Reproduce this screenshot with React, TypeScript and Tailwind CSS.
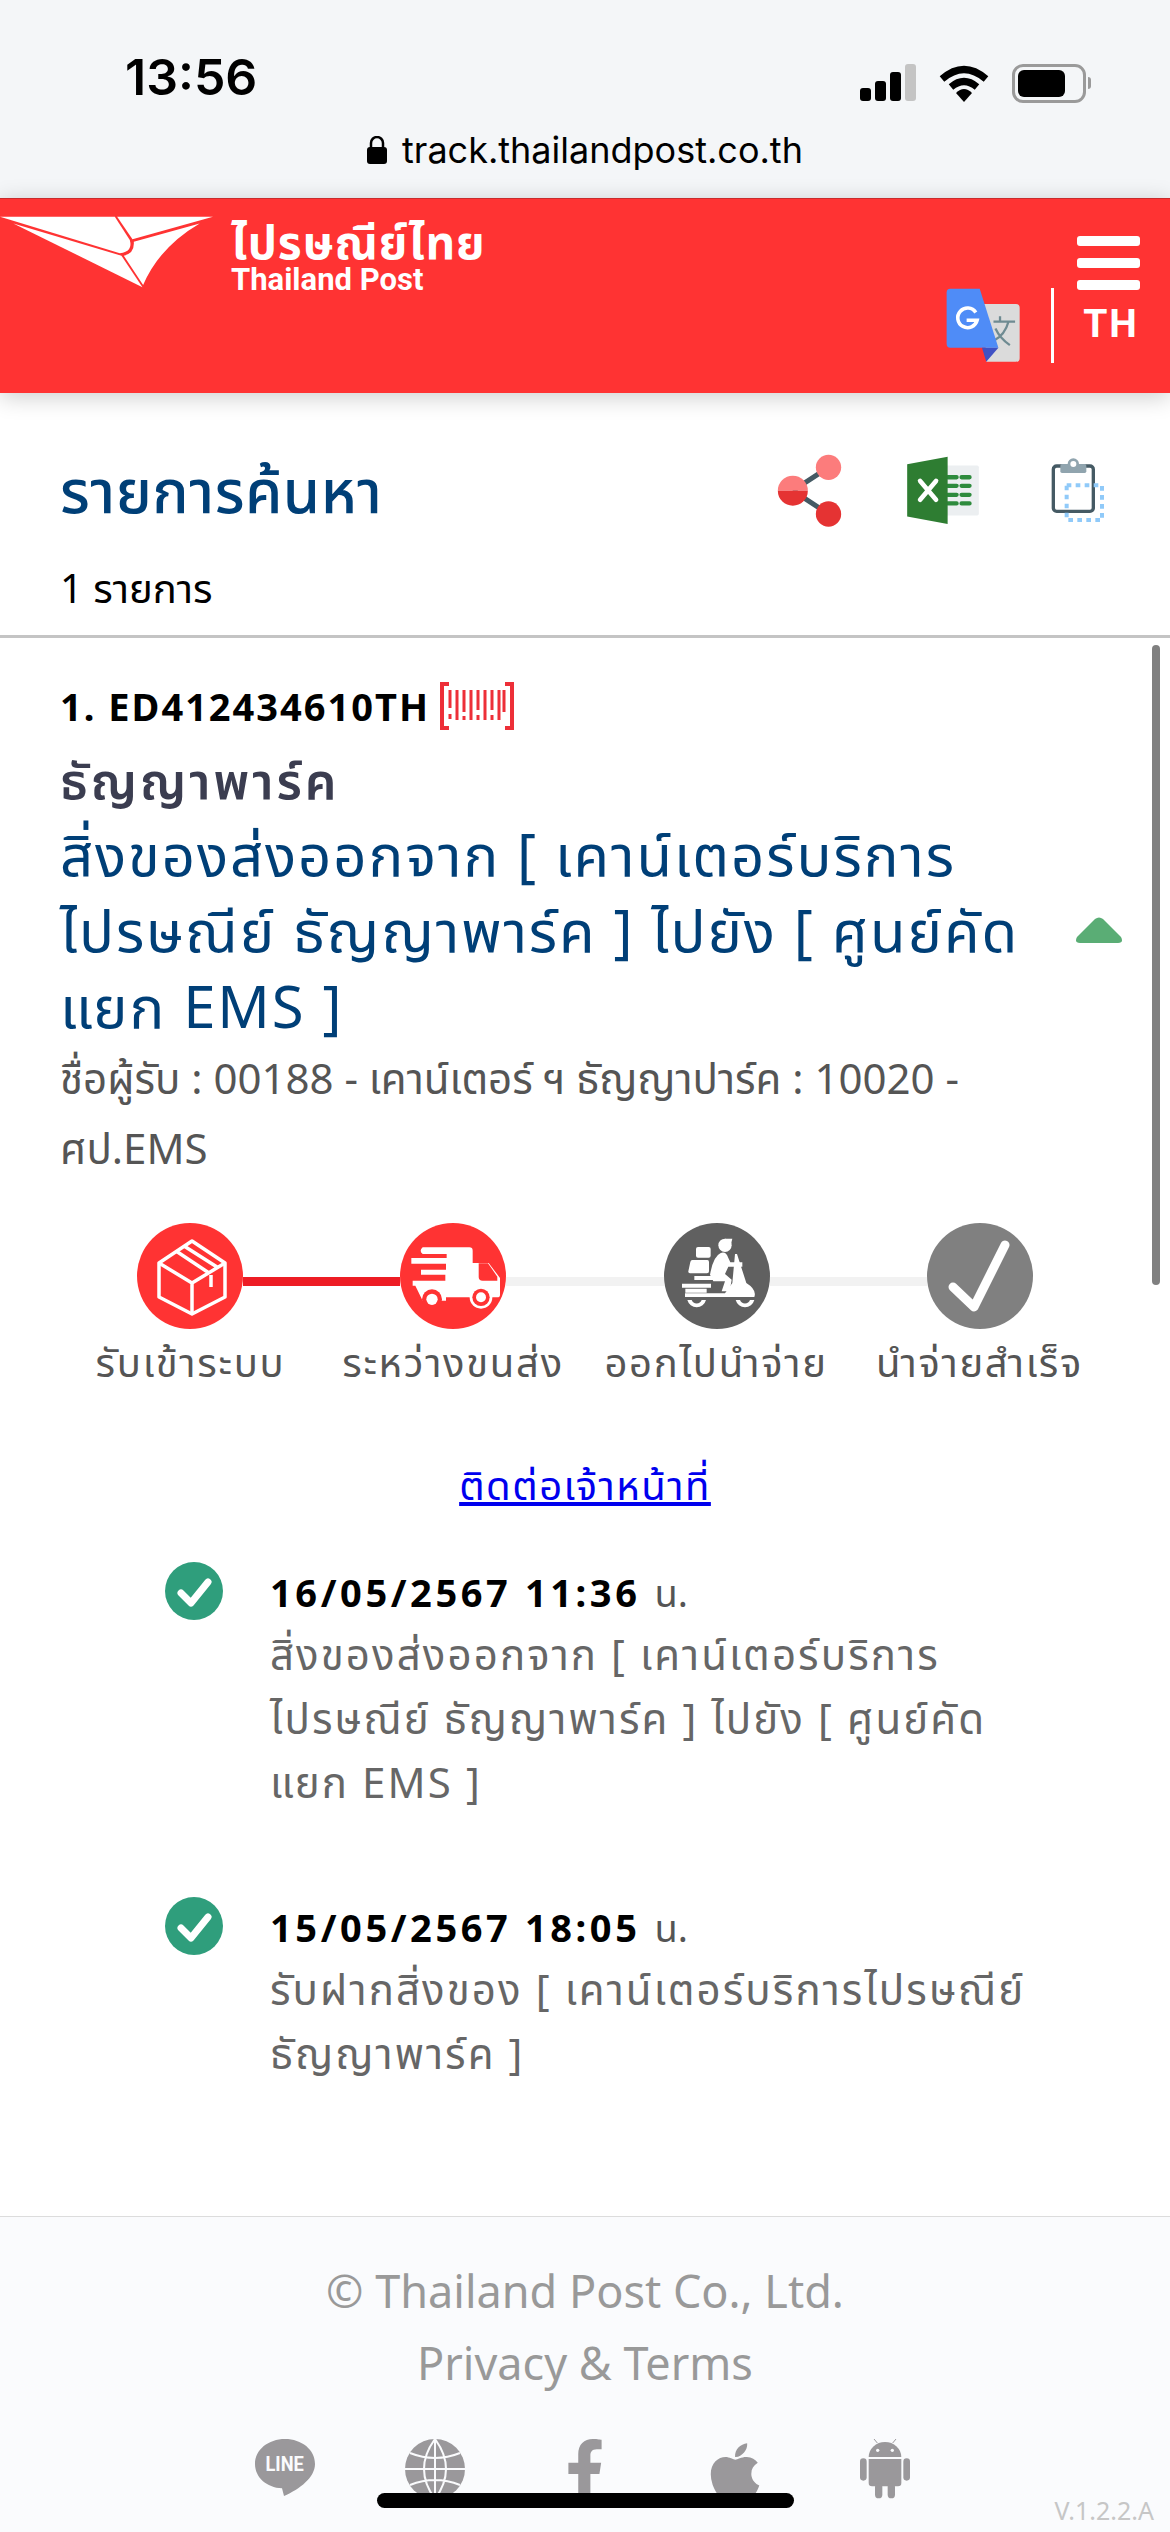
import { FaApple, FaFacebookF } from 'react-icons/fa'

const steps = ['รับเข้าระบบ', 'ระหว่างขนส่ง', 'ออกไปนำจ่าย', 'นำจ่ายสำเร็จ']

function Logo() {
  return (
    <svg width="213" height="74" viewBox="0 78 640 222" fill="#fff" className="shrink-0">
      <path d="M0 80H345L390 150Q400 185 360 190Z" />
      <path d="M352 80H640L398 148Z" />
      <path d="M40 100L365 197L428 292Z" />
      <path d="M600 100Q480 170 430 285L372 197Q405 190 402 155Z" />
    </svg>
  )
}

function TranslateIcon() {
  return (
    <svg width="74" height="75" viewBox="75 203 226 226" className="shrink-0">
      <path d="M190 250H288Q300 250 300 262V415Q300 427 288 427H198Z" fill="#dbdbdb" />
      <path d="M220 304H286M240 288V304M266 304Q255 345 222 362M226 325Q240 355 270 376" fill="none" stroke="#6f8b92" strokeWidth="7" />
      <path d="M88 204H178L235 384H88Q77 384 77 372V215Q77 204 88 204Z" fill="#4f8cf7" />
      <path d="M185 384H235L198 427Z" fill="#3f51c4" />
      <path d="M166 276A30 30 0 1 0 170 300H138" fill="none" stroke="#fff" strokeWidth="11" />
    </svg>
  )
}

function ShareIcon() {
  return (
    <svg width="67" height="75" viewBox="80 60 200 225">
      <path d="M130 173L237 103M130 173L237 243" stroke="#455a64" strokeWidth="15" />
      <circle cx="237" cy="103" r="38" fill="#fc7c7c" />
      <circle cx="237" cy="243" r="38" fill="#e53333" />
      <path d="M85 173A45 45 0 0 1 175 173Z" fill="#fc7c7c" />
      <path d="M85 173A45 45 0 0 0 175 173Z" fill="#e53333" />
    </svg>
  )
}

function ExcelIcon() {
  return (
    <svg width="74" height="69" viewBox="465 70 222 208">
      <rect x="580" y="99" width="104" height="150" rx="5" fill="#eceff1" />
      <path d="M590 134H617M632 134H656M590 160H617M632 160H656M590 187H617M632 187H656M590 213H617M632 213H656" stroke="#2e8b3d" strokeWidth="13" strokeLinecap="round" />
      <path d="M468 95L590 72V275L468 252Z" fill="#2e7d32" />
      <path d="M507 145L555 202M555 145L507 202" stroke="#fff" strokeWidth="14" strokeLinecap="round" />
    </svg>
  )
}

function ClipboardIcon() {
  return (
    <svg width="54" height="65" viewBox="900 80 162 195">
      <rect x="907" y="104" width="120" height="136" rx="10" fill="none" stroke="#455a64" strokeWidth="10" />
      <rect x="928" y="98" width="78" height="27" rx="5" fill="#90a4ae" />
      <circle cx="967" cy="98" r="13" fill="#fff" stroke="#90a4ae" strokeWidth="8" />
      <rect x="947" y="162" width="106" height="104" fill="none" stroke="#90caf9" strokeWidth="12" strokeDasharray="14 13" />
    </svg>
  )
}

function BarcodeIcon() {
  return (
    <svg width="74" height="48" viewBox="0 0 74 48" className="shrink-0" fill="none" stroke="#ed2f38">
      <path d="M9 2H2V46H9M65 2H72V46H65" strokeWidth="4" />
      <path d="M10 8V26M17 8V38M24 8V30M31 8V38M38 8V28M45 8V38M52 8V28M59 8V38M64 8V30" strokeWidth="3" />
      <path d="M10 32V37M24 34V38M38 33V38M52 33V38" strokeWidth="3" />
    </svg>
  )
}

function BoxIcon() {
  return (
    <svg width="106" height="106" viewBox="0 0 106 106" fill="none" stroke="#fff" strokeWidth="3.5" strokeLinejoin="round">
      <path d="M55 18L88 40V74L55 91L22 74V40Z" />
      <path d="M22 40L55 60L88 40M55 60V91M39 28L72 50M47 23L80 44M74 52V64" />
    </svg>
  )
}

function TruckIcon() {
  return (
    <svg width="106" height="106" viewBox="32 25 318 318">
      <path d="M100 98H240Q250 98 250 108V145H298L332 190V240Q332 248 324 248H170V258H100L78 213H70V198H168V180H95V165H170V147H66V130H172V118H100Q88 108 100 98Z" fill="#fff" />
      <path d="M268 146H296L324 186V198H280Q268 198 268 186Z" fill="#ff3333" />
      <circle cx="128" cy="254" r="30" fill="#ff3333" />
      <circle cx="128" cy="254" r="17" fill="#fff" />
      <circle cx="275" cy="248" r="34" fill="#fff" />
      <circle cx="275" cy="248" r="26" fill="#ff3333" />
      <circle cx="275" cy="248" r="15" fill="#fff" />
    </svg>
  )
}

function ScooterIcon() {
  return (
    <svg width="106" height="106" viewBox="817 25 318 318" fill="#fff">
      <circle cx="1000" cy="92" r="20" />
      <path d="M1000 72H1022L1018 88H1000Z" />
      <rect x="913" y="97" width="44" height="32" rx="6" />
      <path d="M902 136H947Q952 136 952 142V170Q952 176 946 176H895Q889 176 890 170L896 142Q897 136 902 136Z" />
      <path d="M986 116Q1002 108 1010 130L1016 143H1052V156H1010L1000 178L1020 195L1014 230H990L1000 200H965L955 180Q965 125 986 116Z" />
      <path d="M1030 118L1036 118L1064 205Q1096 225 1088 247H880V236H1000L1022 205Z" />
      <path d="M908 184H968V196H908ZM871 207H958V219H871ZM881 222H945V234H881Z" />
      <path d="M887 256A29 29 0 0 0 943 256H930A16 16 0 0 1 900 256Z" />
      <path d="M1032 256A29 29 0 0 0 1088 256H1075A16 16 0 0 1 1045 256Z" />
    </svg>
  )
}

function CheckIcon() {
  return (
    <svg width="106" height="106" viewBox="0 0 106 106" fill="none" stroke="#fff" strokeWidth="9" strokeLinecap="round" strokeLinejoin="round">
      <path d="M26 64L47 84L78 22" />
    </svg>
  )
}

function TickCircle() {
  return (
    <svg width="58" height="58" viewBox="0 0 58 58" className="shrink-0">
      <circle cx="29" cy="29" r="29" fill="#2f9e7c" />
      <path d="M16 31L26 41L43 20" fill="none" stroke="#fff" strokeWidth="7" strokeLinecap="round" strokeLinejoin="round" />
    </svg>
  )
}

function LineIcon() {
  return (
    <svg width="60" height="57" viewBox="45 30 180 171">
      <path d="M135 30C185 30 225 62 225 105C225 145 180 180 132 201L126 178C80 176 45 145 45 105C45 62 85 30 135 30Z" fill="#9a989b" />
      <text x="134" y="127" textAnchor="middle" fontSize="60" fontWeight="700" fill="#fafbfd" fontFamily="Roboto, sans-serif" textLength="115" lengthAdjust="spacingAndGlyphs">LINE</text>
    </svg>
  )
}

function GlobeIcon() {
  return (
    <svg width="60" height="60" viewBox="0 0 60 60" fill="none">
      <circle cx="30" cy="30" r="30" fill="#9a989b" />
      <path d="M0 30H60M30 0V60M5 14Q30 24 55 14M5 46Q30 36 55 46M30 0Q8 30 30 60M30 0Q52 30 30 60" stroke="#fafbfd" strokeWidth="2" />
    </svg>
  )
}

function AndroidIcon() {
  return (
    <svg width="50" height="60" viewBox="600 28 150 180" fill="#9a989b">
      <path d="M626 82A49 45 0 0 1 724 82Z" />
      <path d="M652 40L642 28M698 40L708 28" stroke="#9a989b" strokeWidth="3" />
      <circle cx="653" cy="62" r="5" fill="#fafbfd" />
      <circle cx="697" cy="62" r="5" fill="#fafbfd" />
      <path d="M626 88H724V160Q724 170 714 170H636Q626 170 626 160Z" />
      <rect x="600" y="86" width="20" height="67" rx="10" />
      <rect x="730" y="86" width="20" height="67" rx="10" />
      <rect x="645" y="160" width="22" height="46" rx="11" />
      <rect x="683" y="160" width="22" height="46" rx="11" />
    </svg>
  )
}

export default function App() {
  return (
    <div className="relative flex h-[2532px] w-[1170px] flex-col overflow-hidden bg-white font-['Noto_Sans','Noto_Sans_Thai',sans-serif]">
      <div className="h-[198px] shrink-0 bg-[#f4f6f8]">
        <div className="flex h-[128px] items-end justify-between pb-[25px] pl-[125px] pr-[79px]">
          <span className="font-['Inter',sans-serif] text-[50px] leading-[52px] font-semibold text-black">13:56</span>
          <div className="flex h-[40px] items-center gap-[23px]">
            <div className="flex h-[36px] items-end gap-[4px]">
              <span className="h-[13px] w-[11px] rounded-[3px] bg-black" />
              <span className="h-[20px] w-[11px] rounded-[3px] bg-black" />
              <span className="h-[29px] w-[11px] rounded-[3px] bg-black" />
              <span className="h-[37px] w-[11px] rounded-[3px] bg-[#c4c4c4]" />
            </div>
            <svg width="50" height="37" viewBox="0 0 50 37" fill="none" stroke="#000" strokeWidth="7">
              <path d="M3 14Q25 -5 47 14M12 22Q25 11 38 22" />
              <path d="M17 28Q25 20 33 28L25 37Z" fill="#000" stroke="none" />
            </svg>
            <div className="flex items-center gap-[2px]">
              <div className="flex h-[39px] w-[74px] items-center rounded-[11px] border-[3px] border-[#9a9a9a] p-[3px]">
                <div className="h-full w-[47px] rounded-[6px] bg-black" />
              </div>
              <span className="h-[12px] w-[3px] rounded-r-full bg-[#9a9a9a]" />
            </div>
          </div>
        </div>
        <div className="flex items-center justify-center gap-[15px] font-['Inter',sans-serif] text-[36px] leading-[44px] text-black">
          <svg width="20" height="28" viewBox="0 0 20 28" fill="#000">
            <rect x="0" y="11" width="20" height="17" rx="3" />
            <path d="M4 12V7A6 6 0 0 1 16 7V12" fill="none" stroke="#000" strokeWidth="2.5" />
          </svg>
          <span>track.thailandpost.co.th</span>
        </div>
      </div>

      <header className="flex h-[195px] shrink-0 justify-between border-t border-[#c92b2b] bg-[#ff3333] pr-[30px] pt-[17px] text-white shadow-[0_4px_22px_rgba(0,0,0,0.2)]">
        <div className="flex items-start gap-[18px]">
          <Logo />
          <div className="flex flex-col">
            <span className="text-[46px] leading-[50px] font-bold tracking-[1px]">ไปรษณีย์ไทย</span>
            <span className="-mt-[1px] font-['Roboto',sans-serif] text-[31px] leading-[30px] font-bold">Thailand Post</span>
          </div>
        </div>
        <div className="flex items-start gap-[31px] pt-[72px]">
          <TranslateIcon />
          <div className="h-[75px] w-[3px] bg-white" />
          <div className="-ml-[8px] -mt-[52px] flex w-[63px] flex-col items-center gap-[12px]">
            <span className="h-[10px] w-full rounded-[3px] bg-white" />
            <span className="h-[10px] w-full rounded-[3px] bg-white" />
            <span className="h-[10px] w-full rounded-[3px] bg-white" />
            <span className="pl-[5px] font-['Roboto',sans-serif] text-[39px] leading-[44px] font-bold tracking-[2px]">TH</span>
          </div>
        </div>
      </header>

      <div className="mt-[47px] flex h-[100px] shrink-0 items-center justify-between pl-[60px] pr-[65px]">
        <h1 className="text-[60px] leading-[80px] font-medium tracking-[0.5px] text-[#003f77]">รายการค้นหา</h1>
        <div className="flex items-center gap-[63px]">
          <ShareIcon />
          <ExcelIcon />
          <div className="ml-[8px]">
            <ClipboardIcon />
          </div>
        </div>
      </div>
      <div className="flex h-[95px] shrink-0 items-center px-[60px] text-[40px] text-black">1 รายการ</div>
      <div className="h-[3px] shrink-0 bg-[#c4c4c4]" />

      <main className="pl-[60px] pt-[38px]">
        <div className="flex h-[60px] items-center gap-[10px] text-[38px] font-bold tracking-[2px] text-black">
          <span>1. ED412434610TH</span>
          <BarcodeIcon />
        </div>
        <div className="flex h-[80px] items-center pt-[8px] text-[50px] font-semibold tracking-[3px] text-[#3b3d50]">ธัญญาพาร์ค</div>
        <div className="flex items-center justify-between pr-[48px]">
          <p className="text-[58px] leading-[76px] tracking-[1.9px] text-[#003f77]">
            สิ่งของส่งออกจาก [ เคาน์เตอร์บริการ
            <br />
            ไปรษณีย์ ธัญญาพาร์ค ] ไปยัง [ ศูนย์คัด
            <br />
            แยก EMS ]
          </p>
          <svg width="46" height="26" viewBox="0 0 46 26" fill="#5aad75" className="shrink-0">
            <path d="M19 2Q23 -1 27 2L45 20Q48 26 42 26H4Q-2 26 1 20Z" />
          </svg>
        </div>
        <p className="-mt-[1px] text-[42px] leading-[70px] text-[#555]">
          ชื่อผู้รับ : 00188 - เคาน์เตอร์ ฯ ธัญญาปาร์ค : 10020 -
          <br />
          ศป.EMS
        </p>
      </main>

      <div className="mt-[40px] flex shrink-0 items-center pl-[137px]">
        <div className="flex h-[106px] w-[106px] items-center justify-center rounded-full bg-[#ff3333]"><BoxIcon /></div>
        <div className="mt-[10px] h-[9px] w-[157px] bg-[#ed1c24]" />
        <div className="flex h-[106px] w-[106px] items-center justify-center rounded-full bg-[#ff3333]"><TruckIcon /></div>
        <div className="mt-[10px] h-[9px] w-[158px] bg-[#f2f2f2]" />
        <div className="flex h-[106px] w-[106px] items-center justify-center rounded-full bg-[#606060]"><ScooterIcon /></div>
        <div className="mt-[10px] h-[9px] w-[157px] bg-[#f2f2f2]" />
        <div className="flex h-[106px] w-[106px] items-center justify-center rounded-full bg-[#808080]"><CheckIcon /></div>
      </div>
      <div className="mt-[8px] grid h-[50px] shrink-0 grid-cols-[263px_262px_264px_263px] pl-[59px] text-[40px] leading-[50px] tracking-[1.7px] text-[#555]">
        {steps.map((s) => (
          <span key={s} className="whitespace-nowrap text-center">{s}</span>
        ))}
      </div>

      <div className="mt-[68px] flex h-[60px] shrink-0 items-center justify-center">
        <a href="#" className="text-[40px] tracking-[1.5px] text-[#0000ee] underline">ติดต่อเจ้าหน้าที่</a>
      </div>

      <section className="mt-[47px] flex shrink-0 gap-[47px] pl-[165px]">
        <TickCircle />
        <div>
          <div className="flex h-[60px] items-center gap-[14px] text-[38px] font-bold tracking-[3.6px] text-black">
            <span>16/05/2567 11:36</span>
            <span className="font-normal tracking-normal text-[#555]">น.</span>
          </div>
          <p className="text-[42px] leading-[64px] tracking-[2.1px] text-[#666]">
            สิ่งของส่งออกจาก [ เคาน์เตอร์บริการ
            <br />
            ไปรษณีย์ ธัญญาพาร์ค ] ไปยัง [ ศูนย์คัด
            <br />
            แยก EMS ]
          </p>
        </div>
      </section>
      <section className="mt-[83px] flex shrink-0 gap-[47px] pl-[165px]">
        <TickCircle />
        <div>
          <div className="flex h-[60px] items-center gap-[14px] text-[38px] font-bold tracking-[3.6px] text-black">
            <span>15/05/2567 18:05</span>
            <span className="font-normal tracking-normal text-[#555]">น.</span>
          </div>
          <p className="text-[42px] leading-[64px] tracking-[2.1px] text-[#666]">
            รับฝากสิ่งของ [ เคาน์เตอร์บริการไปรษณีย์
            <br />
            ธัญญาพาร์ค ]
          </p>
        </div>
      </section>

      <footer className="relative mt-auto h-[316px] shrink-0 border-t border-[#dcdcdc] bg-[#fafbfd] pt-[38px] text-center text-[45px] leading-[72px] text-[#999]">
        <p>© Thailand Post Co., Ltd.</p>
        <p>Privacy &amp; Terms</p>
        <div className="mt-[40px] flex justify-center text-[#9a989b]">
          <div className="flex w-[150px] justify-center"><LineIcon /></div>
          <div className="flex w-[150px] justify-center"><GlobeIcon /></div>
          <div className="flex w-[150px] justify-center"><FaFacebookF size={62} /></div>
          <div className="flex w-[150px] justify-center"><FaApple size={66} /></div>
          <div className="flex w-[150px] justify-center"><AndroidIcon /></div>
        </div>
        <span className="absolute bottom-[4px] right-[16px] text-[25px] leading-[36px] text-[#c6c6c6]">V.1.2.2.A</span>
      </footer>

      <div className="absolute left-[1152px] top-[645px] h-[640px] w-[8px] rounded-full bg-[#808080]" />
      <div className="absolute left-[377px] top-[2493px] h-[15px] w-[417px] rounded-full bg-black" />
    </div>
  )
}
